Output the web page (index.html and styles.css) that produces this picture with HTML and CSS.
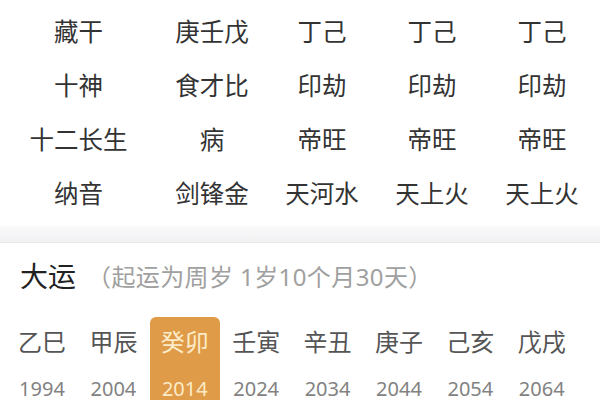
FILE: index.html
```html
<!DOCTYPE html>
<html lang="zh-CN">
<head>
<meta charset="utf-8">
<link rel="stylesheet" href="styles.css">
</head>
<body>
<div class="page">
  <section class="table">
    <div class="cell first">藏干</div><div class="cell">庚壬戊</div><div class="cell">丁己</div><div class="cell">丁己</div><div class="cell">丁己</div>
    <div class="cell first">十神</div><div class="cell">食才比</div><div class="cell">印劫</div><div class="cell">印劫</div><div class="cell">印劫</div>
    <div class="cell first">十二长生</div><div class="cell">病</div><div class="cell">帝旺</div><div class="cell">帝旺</div><div class="cell">帝旺</div>
    <div class="cell first">纳音</div><div class="cell">剑锋金</div><div class="cell">天河水</div><div class="cell">天上火</div><div class="cell">天上火</div>
  </section>
  <div class="band"></div>
  <section class="dayun">
    <div class="title-row">
      <span class="title">大运</span>
      <span class="sub">（起运为周岁 1岁10个月30天）</span>
    </div>
    <div class="items">
      <div class="item"><div class="gz">乙巳</div><div class="yr">1994</div></div>
      <div class="item"><div class="gz">甲辰</div><div class="yr">2004</div></div>
      <div class="item active"><div class="gz">癸卯</div><div class="yr">2014</div></div>
      <div class="item"><div class="gz">壬寅</div><div class="yr">2024</div></div>
      <div class="item"><div class="gz">辛丑</div><div class="yr">2034</div></div>
      <div class="item"><div class="gz">庚子</div><div class="yr">2044</div></div>
      <div class="item"><div class="gz">己亥</div><div class="yr">2054</div></div>
      <div class="item"><div class="gz">戊戌</div><div class="yr">2064</div></div>
    </div>
  </section>
</div>
</body>
</html>
```

FILE: styles.css
```css
html, body {
  margin: 0;
  padding: 0;
  background: #ffffff;
  overflow: hidden;
}
body {
  width: 600px;
  height: 400px;
  font-family: "Noto Sans", "Noto Sans CJK SC", sans-serif;
}
.page {
  width: 600px;
  height: 400px;
  overflow: hidden;
}
.table {
  display: grid;
  grid-template-columns: 157px 110px 110px 110px 110px;
  grid-auto-rows: 54px;
  padding: 3px 0 7px;
  background: #ffffff;
}
.cell {
  display: flex;
  align-items: center;
  justify-content: center;
  font-size: 24.5px;
  color: #333333;
  white-space: nowrap;
}
.band {
  height: 16px;
  background: linear-gradient(#fafafa, #f2f2f4);
  border-bottom: 1px solid #e9e9ec;
}
.dayun {
  background: #ffffff;
}
.title-row {
  display: flex;
  align-items: center;
  height: 40px;
  padding: 12px 0 0 20px;
}
.title {
  font-size: 28px;
  color: #222222;
}
.sub {
  margin-left: 11px;
  font-size: 24px;
  letter-spacing: 0.4px;
  color: #a0a0a0;
}
.items {
  display: grid;
  grid-template-columns: repeat(8, 71.4px);
  padding-left: 7px;
  margin-top: 22px;
}
.item {
  display: flex;
  flex-direction: column;
  align-items: center;
  width: 70px;
  height: 110px;
  padding-top: 10px;
  box-sizing: border-box;
  border-radius: 6px;
}
.gz {
  font-size: 24px;
  line-height: 30px;
  color: #555555;
}
.yr {
  margin-top: 22px;
  font-size: 20px;
  line-height: 20px;
  color: #828282;
}
.item.active {
  background: #df9b47;
}
.item.active .gz,
.item.active .yr {
  color: #fcebc8;
}
```
